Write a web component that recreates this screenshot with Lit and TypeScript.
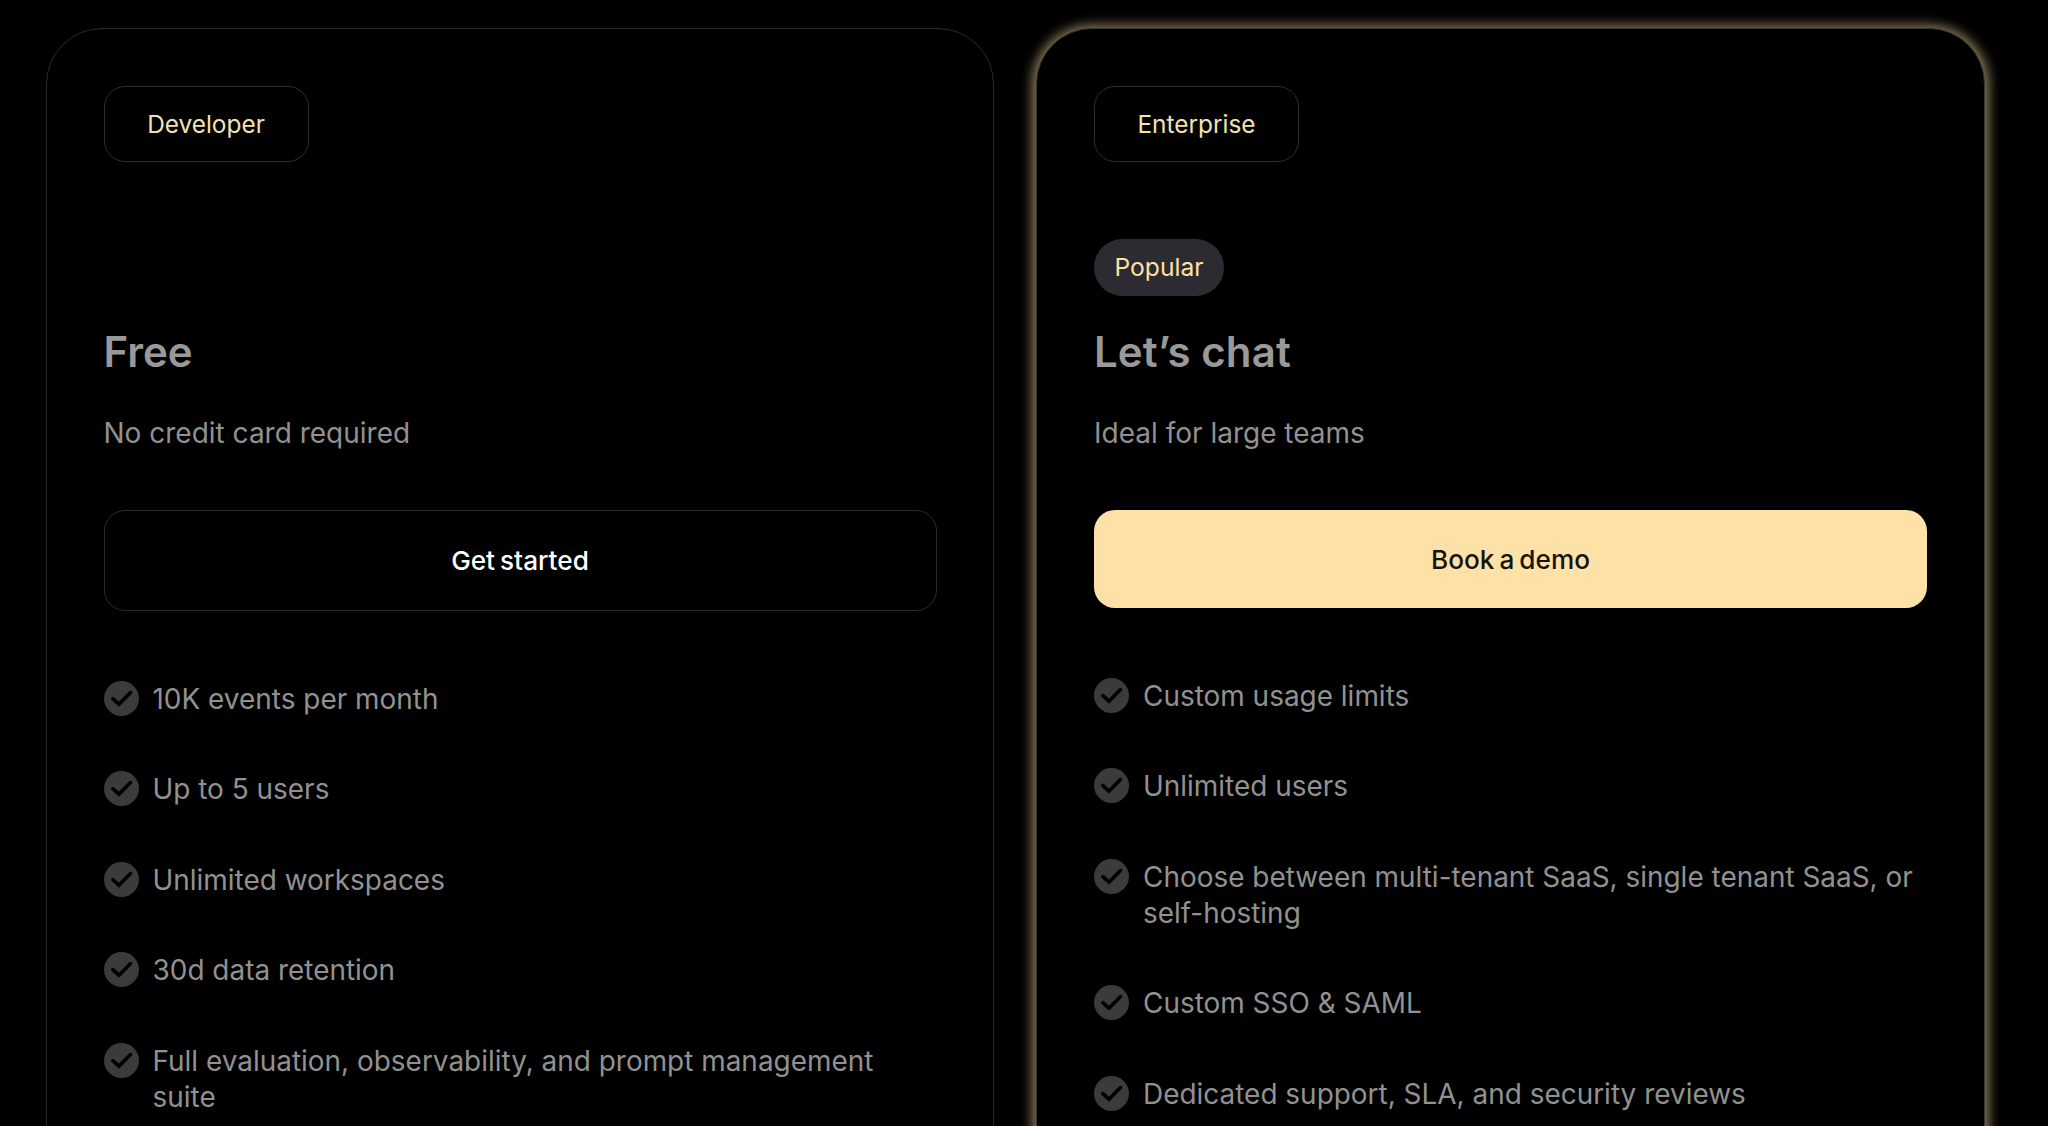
import { css, html, LitElement } from "lit";

interface Plan {
    name: string
    price: string
    description: string
    action: string
    popular?: boolean
    features: string[]
}

const plans: Plan[] = [
    {
        name: 'Developer',
        price: 'Free',
        description: 'No credit card required',
        action: 'Get started',
        features: [
            '10K events per month',
            'Up to 5 users',
            'Unlimited workspaces',
            '30d data retention',
            'Full evaluation, observability, and prompt management suite',
        ]
    },
    {
        name: 'Enterprise',
        price: 'Let’s chat',
        description: 'Ideal for large teams',
        action: 'Book a demo',
        popular: true,
        features: [
            'Custom usage limits',
            'Unlimited users',
            'Choose between multi-tenant SaaS, single tenant SaaS, or self-hosting',
            'Custom SSO & SAML',
            'Dedicated support, SLA, and security reviews',
        ]
    }
]

export class PlanCard extends LitElement {

    declare plan: Plan

    static get styles() {
        return css`

            :host {
                display: block;
            }

            .card {
                box-sizing: border-box;
                height: 1240px;
                padding: 57px 56.5px;
                border: 1px solid #2b2b2b;
                border-radius: 56px;
                background: #000;
            }

            .card.popular {
                padding: 57px;
                border-color: #35362d;
                box-shadow: 0 1.5px 12px 4px #8a7a58;
            }

            .name {
                box-sizing: border-box;
                display: flex;
                align-items: center;
                justify-content: center;
                width: 205px;
                height: 76px;
                border: 1px solid #2e2e2e;
                border-radius: 21px;
                color: #f3e2b0;
                font-size: 24.4px;
            }

            .tag-row {
                height: 57px;
                margin-top: 77px;
            }

            .tag {
                box-sizing: border-box;
                display: inline-flex;
                align-items: center;
                justify-content: center;
                width: 130px;
                height: 57px;
                padding-bottom: 2px;
                border-radius: 29px;
                background: #2c2b32;
                color: #fee1a6;
                font-size: 24.6px;
            }

            h2 {
                margin: 30px 0 0;
                color: #999;
                font-size: 42px;
                line-height: 52px;
                font-weight: 600;
            }

            .popular h2 {
                letter-spacing: 0.1px;
            }

            p {
                margin: 37px 0 0;
                color: #919191;
                font-size: 28px;
                line-height: 36px;
            }

            button {
                display: block;
                width: 100%;
                height: 101px;
                margin: 59px 0 0;
                padding: 0;
                border: 1px solid #2b2b2b;
                border-radius: 21px;
                background: #000;
                color: #fff;
                font-family: inherit;
                font-size: 26.2px;
                font-weight: 500;
                word-spacing: -2px;
            }

            .popular button {
                height: 98px;
                border: none;
                background: #fee1a6;
                color: #161410;
            }

            ul {
                display: flex;
                flex-direction: column;
                gap: 54.4px;
                margin: 70px 0 0;
                padding: 0;
                list-style: none;
            }

            li {
                display: flex;
                gap: 14px;
                color: #919191;
                font-size: 27.95px;
                line-height: 36px;
            }

            svg {
                flex: none;
                width: 35px;
                height: 35px;
            }
        `
    }

    static properties = {
        plan: { type: Object },
    };

    render() {
        const { name, price, description, action, popular, features } = this.plan

        return html`
            <div class="card ${popular ? 'popular' : ''}">
                <div class="name"><span>${name}</span></div>
                <div class="tag-row">
                    ${popular ? html`<span class="tag">Popular</span>` : ''}
                </div>
                <h2><span>${price}</span></h2>
                <p><span>${description}</span></p>
                <button><span>${action}</span></button>
                <ul>
                    ${features.map((feature) => html`
                        <li>
                            <svg viewBox="0 0 35 35">
                                <circle cx="17.5" cy="17.5" r="17.5" fill="#3d3a3a" />
                                <path d="M8.8 17.6 L15 23.2 L26.5 11.6" fill="none" stroke="#000" stroke-width="3.6" stroke-linecap="round" stroke-linejoin="miter" />
                            </svg>
                            <span>${feature}</span>
                        </li>
                    `)}
                </ul>
            </div>
        `
    }
}
customElements.define('plan-card', PlanCard);

export class AppRoot extends LitElement {

    static get styles() {
        return css`

            :host {
                display: block;
                height: 1126px;
                overflow: hidden;
                background: #000;
                font-family: Inter, 'Liberation Sans', sans-serif;
            }

            .plans {
                display: grid;
                grid-template-columns: 948px 949px;
                gap: 42px;
                padding: 28px 0 0 46px;
            }
        `
    }

    render() {
        return html`
            <div class="plans">
                ${plans.map((plan) => html`<plan-card .plan=${plan}></plan-card>`)}
            </div>
        `
    }
}
customElements.define('app-root', AppRoot);
